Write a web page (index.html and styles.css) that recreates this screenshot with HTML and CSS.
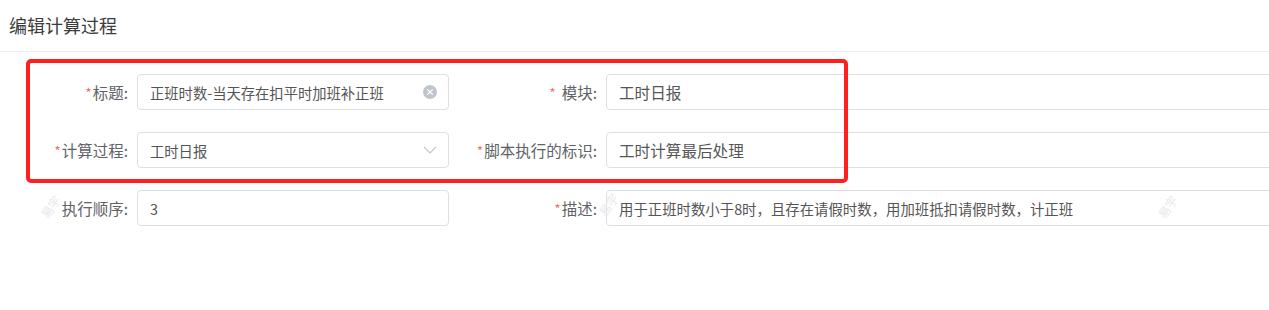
FILE: index.html
```html
<!DOCTYPE html>
<html lang="zh">
<head>
<meta charset="utf-8">
<title>编辑计算过程</title>
<link rel="stylesheet" href="styles.css">
</head>
<body>
<div class="page">
  <div class="header">编辑计算过程</div>
  <div class="form">
    <div class="label"><span class="req">*</span>标题:</div>
    <div class="input small has-icon">
      <span class="val">正班时数-当天存在扣平时加班补正班</span>
      <svg class="icon" width="14" height="14" viewBox="0 0 14 14"><circle cx="7" cy="7" r="7" fill="#c0c4cc"/><path d="M4.6 4.6 L9.4 9.4 M9.4 4.6 L4.6 9.4" stroke="#fff" stroke-width="1.3" stroke-linecap="round"/></svg>
    </div>
    <div class="label"><span class="req spaced">*</span>模块:</div>
    <div class="input big"><span class="val">工时日报</span></div>

    <div class="label"><span class="req">*</span>计算过程:</div>
    <div class="input small has-icon">
      <span class="val">工时日报</span>
      <svg class="icon" width="14" height="8" viewBox="0 0 14 8"><path d="M1 1 L7 7 L13 1" fill="none" stroke="#c0c4cc" stroke-width="1.1"/></svg>
    </div>
    <div class="label"><span class="req">*</span>脚本执行的标识:</div>
    <div class="input big"><span class="val">工时计算最后处理</span></div>

    <div class="label">执行顺序:</div>
    <div class="input tiny"><span class="val">3</span></div>
    <div class="label"><span class="req">*</span>描述:</div>
    <div class="input tiny"><span class="val">用于正班时数小于8时，且存在请假时数，用加班抵扣请假时数，计正班</span></div>
  </div>
  <div class="highlight"></div>
  <div class="wm wm1">易宇</div>
  <div class="wm wm2">易宇</div>
  <div class="wm wm3">易宇</div>
</div>
</body>
</html>
```

FILE: styles.css
```css
html, body {
  margin: 0;
  padding: 0;
  background: #fff;
  overflow: hidden;
}
body {
  font-family: "Noto Sans CJK SC", "Noto Sans", "Liberation Sans", sans-serif;
  color: #606266;
}
.page {
  position: relative;
  width: 1269px;
  height: 310px;
  overflow: hidden;
}
.header {
  height: 52px;
  box-sizing: border-box;
  border-bottom: 1px solid #ebeef5;
  padding-left: 9px;
  font-size: 18px;
  line-height: 50px;
  color: #3c3c3c;
}
.form {
  display: grid;
  grid-template-columns: 137px 312px 157px 700px;
  grid-auto-rows: 36px;
  row-gap: 22px;
  padding-top: 22px;
  width: 1306px;
}
.label {
  display: flex;
  align-items: center;
  justify-content: flex-end;
  padding-right: 9px;
  font-size: 15.5px;
  color: #606266;
  white-space: nowrap;
}
.req {
  color: #f56c6c;
  font-size: 13px;
  margin-right: 1px;
}
.req.spaced {
  margin-right: 6px;
}
.input {
  display: flex;
  align-items: center;
  box-sizing: border-box;
  border: 1px solid #dcdfe6;
  border-radius: 4px;
  padding: 0 12px;
  color: #555;
  white-space: nowrap;
  overflow: hidden;
}
.input .val {
  flex: 1;
}
.small { font-size: 14.3px; }
.big { font-size: 15.6px; }
.tiny { font-size: 14.4px; }
.has-icon { padding-right: 11px; }
.icon { flex: none; }
.highlight {
  position: absolute;
  left: 26px;
  top: 59px;
  width: 822px;
  height: 124px;
  box-sizing: border-box;
  border: 4px solid #ff1f1f;
  border-radius: 5px;
}
.wm {
  position: absolute;
  font-size: 12px;
  color: #e8e8ea;
  transform: rotate(-55deg);
  white-space: nowrap;
}
.wm1 { left: 38px; top: 198px; }
.wm2 { left: 596px; top: 196px; }
.wm3 { left: 1155px; top: 198px; }
```
